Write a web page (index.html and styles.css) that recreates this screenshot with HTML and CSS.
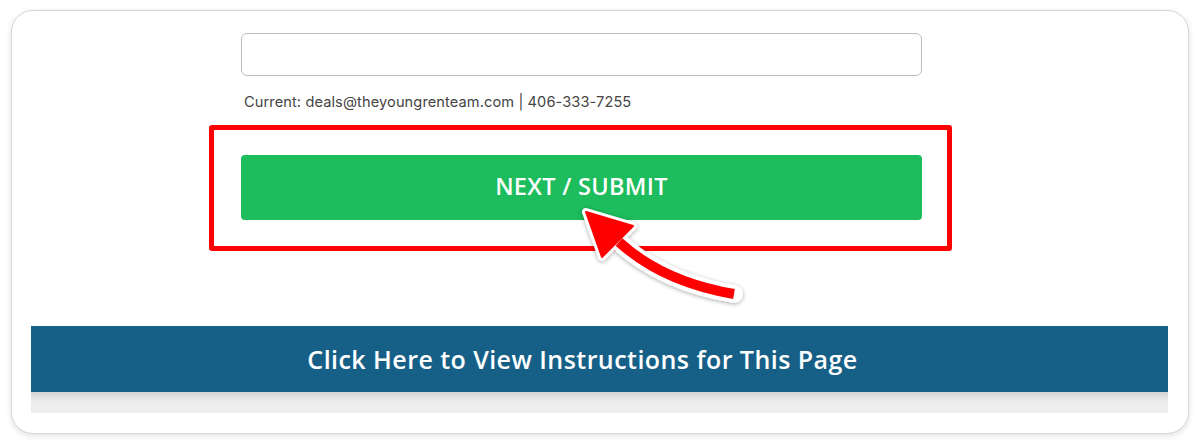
FILE: index.html
```html
<!DOCTYPE html>
<html>
<head>
<meta charset="utf-8">
<link rel="stylesheet" href="styles.css">
</head>
<body>
<div class="card">
  <div class="form">
    <div class="field"></div>
    <div class="current">Current: deals@theyoungrenteam.com | 406-333-7255</div>
    <div class="highlight">
      <button class="submit">NEXT / SUBMIT</button>
    </div>
  </div>
  <div class="banner-wrap">
    <div class="banner">Click Here to View Instructions for This Page</div>
    <div class="banner-shade"></div>
  </div>
  <svg class="arrow" width="190" height="120" viewBox="0 0 190 120">
    <defs>
      <filter id="sh" x="-20%" y="-20%" width="140%" height="140%">
        <feDropShadow dx="0" dy="1" stdDeviation="2" flood-color="#000" flood-opacity="0.35"/>
      </filter>
    </defs>
    <g filter="url(#sh)">
      <path d="M48 42 Q92 82 163 94" fill="none" stroke="#fff" stroke-width="18" stroke-linecap="round"/>
      <polygon points="15,12 31,57 62,26" fill="#fff" stroke="#fff" stroke-width="8" stroke-linejoin="round"/>
    </g>
    <path d="M48 42 Q92 82 163 94" fill="none" stroke="#f00" stroke-width="10" stroke-linecap="butt"/>
    <polygon points="15,12 31,57 62,26" fill="#f00" stroke="#f00" stroke-width="2" stroke-linejoin="round"/>
  </svg>
</div>
</body>
</html>
```
FILE: styles.css
```css
html, body {
  margin: 0;
  padding: 0;
  background: #ffffff;
}
body {
  width: 1200px;
  height: 445px;
  overflow: hidden;
  font-family: Inter, "Liberation Sans", sans-serif;
}
.card {
  position: relative;
  box-sizing: border-box;
  margin: 10px 11px 0 11px;
  width: 1178px;
  height: 424px;
  border: 1px solid #d6d6d6;
  border-radius: 22px;
  background: #fff;
  box-shadow: 0 2px 6px rgba(0,0,0,0.12);
  padding-top: 22px;
}
.form {
  width: 681px;
  margin-left: 229px;
  display: flex;
  flex-direction: column;
}
.field {
  box-sizing: border-box;
  height: 43px;
  border: 1px solid #bdbdbd;
  border-radius: 6px;
  background: #fff;
}
.current {
  margin-top: 18px;
  padding-left: 3px;
  font-size: 14.6px;
  letter-spacing: 0.1px;
  line-height: 17px;
  color: #454545;
}
.highlight {
  box-sizing: border-box;
  margin: 14px 0 0 -32px;
  width: 743px;
  height: 126px;
  border: 5px solid #ff0000;
  border-radius: 3px;
  padding: 25px 0 0 27px;
}
.submit {
  display: block;
  width: 681px;
  height: 65px;
  border: none;
  border-radius: 4px;
  background: #1dbc5d;
  color: #fff;
  font-family: "Open Sans", Inter, sans-serif;
  font-weight: 600;
  font-size: 23.5px;
  letter-spacing: 0.3px;
  padding: 0 0 4px 0;
}
.banner-wrap {
  margin: 75px 20px 0 19px;
}
.banner {
  height: 66px;
  background: #166087;
  color: #fff;
  display: flex;
  align-items: center;
  justify-content: center;
  padding-right: 34px;
  font-family: "Open Sans", sans-serif;
  font-weight: 600;
  font-size: 25px;
  letter-spacing: 0.45px;
}
.banner-shade {
  height: 21px;
  background: linear-gradient(#d4d4d4, #ebebeb 40%, #efefef);
}
.arrow {
  position: absolute;
  left: 559px;
  top: 189px;
}
```
